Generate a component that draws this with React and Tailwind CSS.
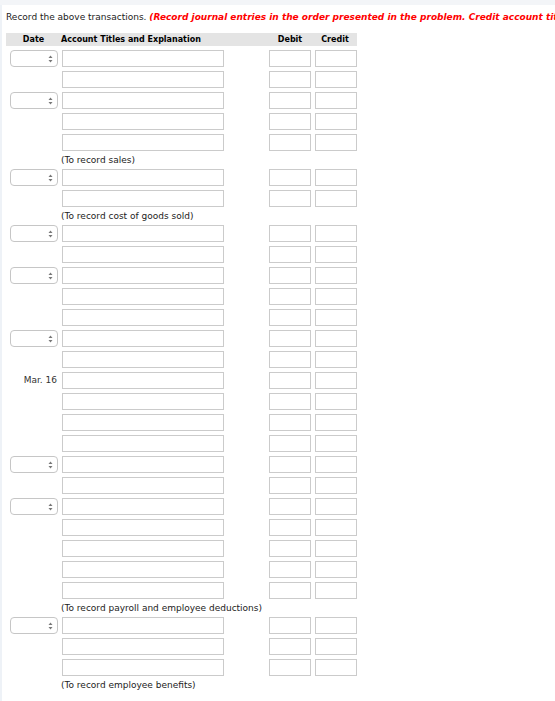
import React from "react";

// journal rows: d = date select, m = fixed date label, e = explanation line
const rows = [
  { d: true }, {}, { d: true }, {}, {},
  { e: "(To record sales)" },
  { d: true }, {},
  { e: "(To record cost of goods sold)" },
  { d: true }, {}, { d: true }, {}, {}, { d: true }, {},
  { m: "Mar. 16" }, {}, {}, {}, { d: true }, {}, { d: true }, {}, {}, {}, {},
  { e: "(To record payroll and employee deductions)" },
  { d: true }, {}, {},
  { e: "(To record employee benefits)" },
];

function DateSelect() {
  return (
    <div className="flex h-[17px] w-[48px] items-center justify-end rounded-[4px] border border-[#c6c6c6] bg-white pr-[4px]">
      <svg width="5" height="8" viewBox="0 0 5 8">
        <path d="M2.5 0.5 L4.5 3 L0.5 3 Z" fill="#777" />
        <path d="M2.5 7.5 L4.5 5 L0.5 5 Z" fill="#777" />
      </svg>
    </div>
  );
}

function Box({ w }) {
  return <div className={`h-[17px] border border-[#cbcbcb] bg-white ${w}`} />;
}

function Row({ row }) {
  if (row.e) {
    return (
      <div className="h-[10px] whitespace-nowrap pl-[55px] text-[9px] leading-[10px] text-[#222]">{row.e}</div>
    );
  }
  return (
    <div className="flex h-[17px] items-center">
      <div className="flex w-[52px] justify-end">
        {row.d && <DateSelect />}
        {row.m && <span className="pr-[1px] text-[9px] text-[#333]">{row.m}</span>}
      </div>
      <div className="ml-[4px]">
        <Box w="w-[162px]" />
      </div>
      <div className="ml-[45px]">
        <Box w="w-[42px]" />
      </div>
      <div className="ml-[4px]">
        <Box w="w-[42px]" />
      </div>
    </div>
  );
}

export default function App() {
  return (
    <div
      className="min-h-[701px] w-[555px] overflow-hidden bg-white"
      style={{ fontFamily: '"DejaVu Sans", Verdana, sans-serif' }}
    >
      <div className="h-[5px] bg-[#f3f5f8]" />
      <div className="flex min-h-[696px] border-l-[2px] border-[#eef2f7]">
        <div className="min-w-0 flex-1 pl-[4px]">
          {/* instructions */}
          <div className="mt-[7px] overflow-hidden whitespace-nowrap text-[9px] leading-[11px] text-[#222]">
            Record the above transactions.{" "}
            <span className="font-bold italic text-[#ff0000]">
              (Record journal entries in the order presented in the problem. Credit account titles are automatically indented when amount is entered.)
            </span>
          </div>

          {/* header */}
          <div className="mt-[10px] flex h-[13px] w-[351px] items-center bg-[#e4e4e4] text-[8px] font-bold text-black">
            <div className="w-[55px] text-center">Date</div>
            <div className="flex-1">Account Titles and Explanation</div>
            <div className="w-[46px] text-center">Debit</div>
            <div className="w-[44px] text-center">Credit</div>
          </div>

          {/* rows */}
          <div className="mt-[4px] flex flex-col gap-[4px]">
            {rows.map((r, i) => (
              <Row key={i} row={r} />
            ))}
          </div>
        </div>
      </div>
    </div>
  );
}
